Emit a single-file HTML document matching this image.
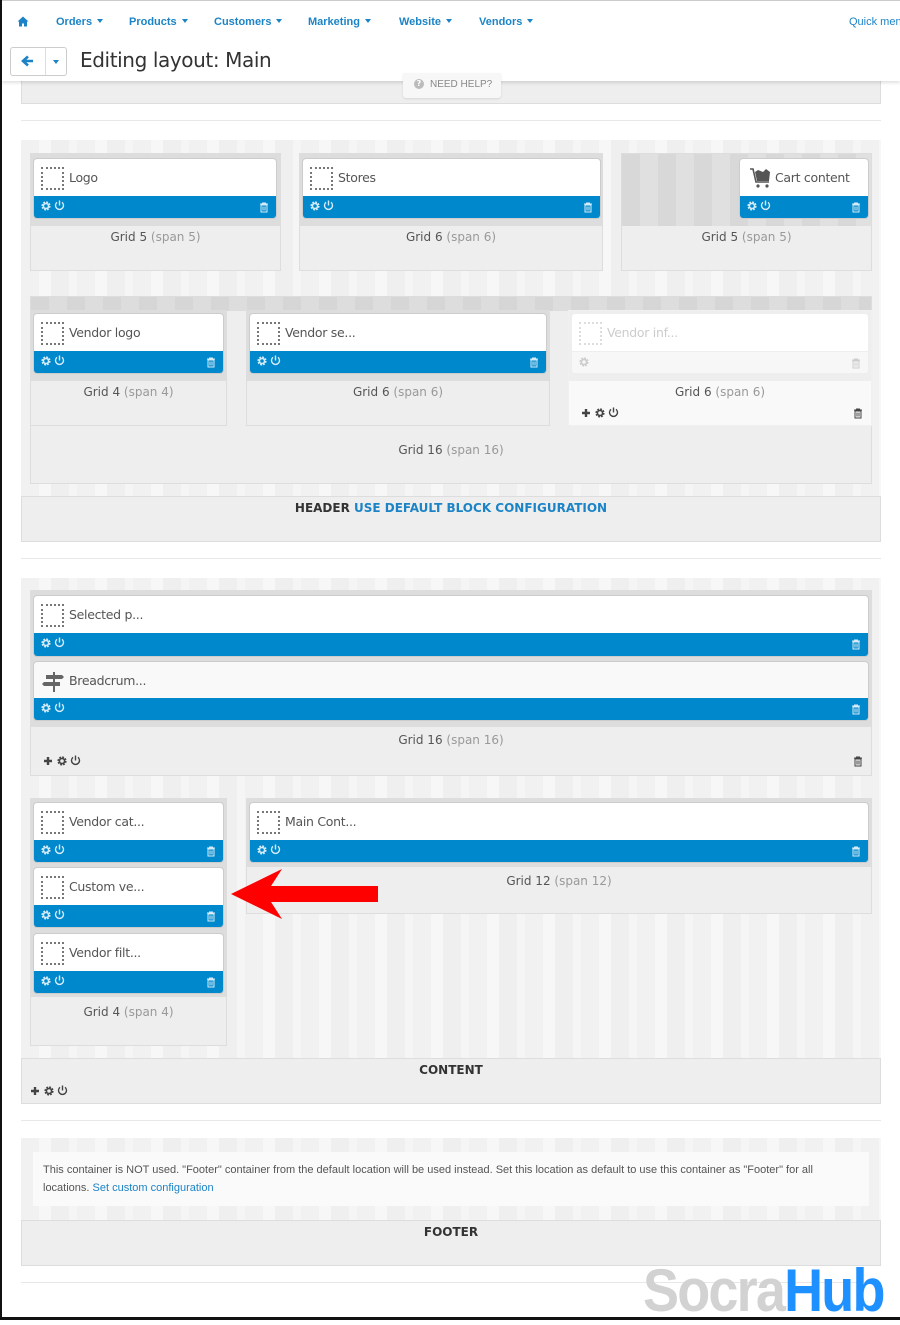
<!DOCTYPE html>
<html><head><meta charset="utf-8">
<style>
*{box-sizing:border-box;margin:0;padding:0}
body{width:900px;height:1320px;position:relative;background:#fff;font-family:"DejaVu Sans","Liberation Sans",sans-serif;overflow:hidden;color:#333}
.a{position:absolute}
.nav{font-family:"Liberation Sans",sans-serif;font-size:11px;font-weight:bold;color:#1c84c6;top:16px}
.nav:after{content:"";display:inline-block;margin-left:5px;border-top:4px solid #1c84c6;border-left:3px solid transparent;border-right:3px solid transparent;vertical-align:2px}
.stripe{background:repeating-linear-gradient(90deg,#f1f1f1 0 18px,#f7f7f7 18px 30px,#efefef 30px 48px,#f5f5f5 48px 56px)}
.grid{position:absolute;background:#eee;border:1px solid #ddd}
.gtop{position:absolute;left:0;right:0;top:0;background:#ddd}
.lbl{position:absolute;left:0;right:0;text-align:center;font-size:12px;color:#555}
.lbl span{color:#999}
.blk{position:absolute;background:#fff;border-radius:3px;box-shadow:0 0 0 1px #ccc;overflow:hidden}
.blk .t{position:absolute;left:35px;top:11px;font-size:12.5px;color:#555;white-space:nowrap;letter-spacing:-0.3px}
.blk .ph{position:absolute;left:7px;top:8px;width:23px;height:23px;border:2px dotted #777}
.blk .bar{position:absolute;left:0;right:0;bottom:0;height:22px;background:#0088cc;color:#d5ecf8}
.bar .g{position:absolute;left:7px;top:5px}
.bar .p{position:absolute;left:20px;top:4px}
.bar .tr{position:absolute;right:7px;top:6px}
.sec{position:absolute;left:21px;width:860px;background:#eee;border:1px solid #ddd;text-align:center;font-size:12px;font-weight:bold;color:#333;padding-top:4px}
.hr{position:absolute;left:21px;width:860px;height:1px;background:#e8e8e8}
</style></head><body>
<svg width="0" height="0" style="position:absolute">
<defs>
<g id="gear"><circle cx="5" cy="5" r="3.3" fill="none" stroke="currentColor" stroke-width="2.6" stroke-dasharray="1.6 1"/><circle cx="5" cy="5" r="2.6" fill="none" stroke="currentColor" stroke-width="1.6"/></g>
<g id="pow"><path d="M3 2.3A4 4 0 1 0 8 2.3" fill="none" stroke="currentColor" stroke-width="1.4"/><path d="M5.5 0.5V5.5" stroke="currentColor" stroke-width="1.4"/></g>
<g id="trash"><path d="M1 2H9M3.5 2V1H6.5V2M2 3H8V10H2Z M4 4.5V8.5M6 4.5V8.5" fill="none" stroke="currentColor" stroke-width="1"/></g>
<g id="plus"><path d="M5 1V9M1 5H9" stroke="currentColor" stroke-width="2.4"/></g>
</defs></svg>

<div class="a" style="left:0;top:0;width:2px;height:1320px;background:#111;z-index:9"></div>
<div class="a" style="left:0;top:1317px;width:900px;height:3px;background:#111;z-index:9"></div>
<div class="a" style="left:0;top:0;width:900px;height:1px;background:#ccc"></div>

<svg class="a" style="left:17px;top:16px" width="12" height="11" viewBox="0 0 12 11"><path d="M6 0.5L0.5 5.5H2V10.5H5V7.5H7V10.5H10V5.5H11.5Z" fill="#1c84c6"/></svg>
<div class="a nav" style="left:56px">Orders</div>
<div class="a nav" style="left:129px">Products</div>
<div class="a nav" style="left:214px">Customers</div>
<div class="a nav" style="left:308px">Marketing</div>
<div class="a nav" style="left:399px">Website</div>
<div class="a nav" style="left:479px">Vendors</div>
<div class="a" style="left:849px;top:16px;font-family:'Liberation Sans',sans-serif;font-size:11px;color:#1c84c6;white-space:nowrap">Quick menu</div>

<div class="a" style="left:2px;top:43px;width:898px;height:38px;background:#fff;box-shadow:0 2px 3px rgba(0,0,0,.12);z-index:3"></div>
<div class="a" style="left:10px;top:47px;width:57px;height:29px;border:1px solid #ccc;border-radius:3px;background:#fff;z-index:4"></div>
<div class="a" style="left:45px;top:48px;width:1px;height:27px;background:#ddd;z-index:4"></div>
<svg class="a" style="left:21px;top:55px;z-index:5" width="13" height="12" viewBox="0 0 13 12"><path d="M12 6H3M7 1.5L2 6L7 10.5" fill="none" stroke="#1c84c6" stroke-width="2.6"/></svg>
<div class="a" style="left:53px;top:60px;border-top:4px solid #1c84c6;border-left:3px solid transparent;border-right:3px solid transparent;z-index:5"></div>
<div class="a" style="left:80px;top:48px;font-size:20px;color:#333;z-index:5;letter-spacing:-0.4px">Editing layout: Main</div>

<div class="a" style="left:21px;top:81px;width:860px;height:23px;background:#eee;border:1px solid #ddd;border-top:none"></div>
<div class="a" style="left:403px;top:73px;width:98px;height:25px;background:#f7f7f7;border-radius:0 0 3px 3px;box-shadow:0 1px 2px rgba(0,0,0,.1);z-index:4;font-size:10px;color:#888;padding:6px 0 0 27px;font-family:'Liberation Sans',sans-serif">NEED HELP?</div>
<div class="a" style="left:414px;top:79px;width:10px;height:10px;border-radius:50%;background:#bbb;z-index:5;color:#fff;font-size:8px;text-align:center;line-height:10px;font-weight:bold">?</div>
<div class="hr" style="top:120px"></div>

<div class="a stripe" style="left:21px;top:140px;width:860px;height:356px"></div>
<div class="grid" style="left:30px;top:153px;width:251px;height:118px"><div class="gtop" style="height:72px"></div><div class="lbl" style="top:76px">Grid 5 <span>(span 5)</span></div></div>
<div class="grid" style="left:299px;top:153px;width:304px;height:118px"><div class="gtop" style="height:72px"></div><div class="lbl" style="top:76px">Grid 6 <span>(span 6)</span></div></div>
<div class="grid" style="left:621px;top:153px;width:251px;height:118px"><div class="gtop" style="height:72px;background:repeating-linear-gradient(90deg,#d8d8d8 0 18px,#e0e0e0 18px 36px)"></div><div class="lbl" style="top:76px">Grid 5 <span>(span 5)</span></div></div>

<div class="blk" style="left:34px;top:159px;width:242px;height:59px"><div class="ph"></div><div class="t">Logo</div><div class="bar"><svg class="g" width="11" height="11"><use href="#gear"/></svg><svg class="p" width="11" height="12"><use href="#pow"/></svg><svg class="tr" width="10" height="11"><use href="#trash"/></svg></div></div>
<div class="blk" style="left:303px;top:159px;width:297px;height:59px"><div class="ph"></div><div class="t">Stores</div><div class="bar"><svg class="g" width="11" height="11"><use href="#gear"/></svg><svg class="p" width="11" height="12"><use href="#pow"/></svg><svg class="tr" width="10" height="11"><use href="#trash"/></svg></div></div>
<div class="blk" style="left:740px;top:159px;width:128px;height:59px"><svg class="a" style="left:9px;top:8px" width="24" height="22" viewBox="0 0 24 22"><path d="M1 2H4L7 15H20" fill="none" stroke="#555" stroke-width="1.6"/><path d="M6 5L9 3L14 5L17 2L21 5L20 14H8Z" fill="#555"/><circle cx="9" cy="19" r="1.6" fill="#555"/><circle cx="18" cy="19" r="1.6" fill="#555"/></svg><div class="t">Cart content</div><div class="bar"><svg class="g" width="11" height="11"><use href="#gear"/></svg><svg class="p" width="11" height="12"><use href="#pow"/></svg><svg class="tr" width="10" height="11"><use href="#trash"/></svg></div></div>

<div class="grid" style="left:30px;top:296px;width:842px;height:188px"><div class="gtop" style="height:14px;background:repeating-linear-gradient(90deg,#d6d6d6 0 18px,#dddddd 18px 36px)"></div><div class="lbl" style="top:146px">Grid 16 <span>(span 16)</span></div></div>
<div class="grid" style="left:30px;top:310px;width:197px;height:116px"><div class="gtop" style="height:70px"></div><div class="lbl" style="top:74px">Grid 4 <span>(span 4)</span></div></div>
<div class="grid" style="left:246px;top:310px;width:304px;height:116px"><div class="gtop" style="height:70px"></div><div class="lbl" style="top:74px">Grid 6 <span>(span 6)</span></div></div>
<div class="grid" style="left:568px;top:310px;width:304px;height:116px;background:#f9f9f9;border-color:#f0f0f0"><div class="gtop" style="height:70px;background:#eee"></div><div class="lbl" style="top:74px">Grid 6 <span>(span 6)</span></div></div>
<div class="blk" style="left:34px;top:314px;width:189px;height:59px"><div class="ph"></div><div class="t">Vendor logo</div><div class="bar"><svg class="g" width="11" height="11"><use href="#gear"/></svg><svg class="p" width="11" height="12"><use href="#pow"/></svg><svg class="tr" width="10" height="11"><use href="#trash"/></svg></div></div>
<div class="blk" style="left:250px;top:314px;width:296px;height:59px"><div class="ph"></div><div class="t">Vendor se...</div><div class="bar"><svg class="g" width="11" height="11"><use href="#gear"/></svg><svg class="p" width="11" height="12"><use href="#pow"/></svg><svg class="tr" width="10" height="11"><use href="#trash"/></svg></div></div>
<div class="blk" style="left:572px;top:314px;width:296px;height:59px;box-shadow:none"><div class="ph" style="border-color:#ddd"></div><div class="t" style="color:#ccc">Vendor inf...</div><div class="bar" style="background:#f7f7f7;border-top:1px solid #eee;color:#ccc"><svg class="g" width="11" height="11"><use href="#gear"/></svg><svg class="tr" width="10" height="11"><use href="#trash"/></svg></div></div>
<svg class="a" style="left:581px;top:408px;color:#444" width="11" height="11"><use href="#plus"/></svg>
<svg class="a" style="left:595px;top:408px;color:#444" width="11" height="11"><use href="#gear"/></svg>
<svg class="a" style="left:608px;top:407px;color:#444" width="11" height="12"><use href="#pow"/></svg>
<svg class="a" style="left:853px;top:408px;color:#444" width="11" height="11"><use href="#trash"/></svg>

<div class="sec" style="top:496px;height:46px">HEADER <span style="color:#1c84c6">USE DEFAULT BLOCK CONFIGURATION</span></div>
<div class="hr" style="top:558px"></div>

<div class="a stripe" style="left:21px;top:578px;width:860px;height:481px"></div>
<div class="grid" style="left:30px;top:590px;width:842px;height:186px"><div class="gtop" style="height:136px"></div><div class="lbl" style="top:142px">Grid 16 <span>(span 16)</span></div></div>
<div class="blk" style="left:34px;top:596px;width:834px;height:60px"><div class="ph"></div><div class="t">Selected p...</div><div class="bar" style="height:23px"><svg class="g" width="11" height="11"><use href="#gear"/></svg><svg class="p" width="11" height="12"><use href="#pow"/></svg><svg class="tr" width="10" height="11"><use href="#trash"/></svg></div></div>
<div class="blk" style="left:34px;top:662px;width:834px;height:58px;background:#f9f9f9"><svg class="a" style="left:8px;top:7px" width="24" height="24" viewBox="0 0 24 24"><path d="M11 3H13V23H11Z M4 6H20L22 8L20 10H4Z M2 13H18V17H2L0 15Z" fill="#666"/></svg><div class="t">Breadcrum...</div><div class="bar"><svg class="g" width="11" height="11"><use href="#gear"/></svg><svg class="p" width="11" height="12"><use href="#pow"/></svg><svg class="tr" width="10" height="11"><use href="#trash"/></svg></div></div>
<svg class="a" style="left:43px;top:756px;color:#444" width="11" height="11"><use href="#plus"/></svg>
<svg class="a" style="left:57px;top:756px;color:#444" width="11" height="11"><use href="#gear"/></svg>
<svg class="a" style="left:70px;top:755px;color:#444" width="11" height="12"><use href="#pow"/></svg>
<svg class="a" style="left:853px;top:756px;color:#444" width="11" height="11"><use href="#trash"/></svg>

<div class="grid" style="left:30px;top:798px;width:197px;height:248px"><div class="gtop" style="height:198px"></div><div class="lbl" style="top:206px">Grid 4 <span>(span 4)</span></div></div>
<div class="grid" style="left:246px;top:798px;width:626px;height:116px"><div class="gtop" style="height:68px"></div><div class="lbl" style="top:75px">Grid 12 <span>(span 12)</span></div></div>
<div class="blk" style="left:34px;top:803px;width:189px;height:59px"><div class="ph"></div><div class="t">Vendor cat...</div><div class="bar"><svg class="g" width="11" height="11"><use href="#gear"/></svg><svg class="p" width="11" height="12"><use href="#pow"/></svg><svg class="tr" width="10" height="11"><use href="#trash"/></svg></div></div>
<div class="blk" style="left:34px;top:868px;width:189px;height:59px"><div class="ph"></div><div class="t">Custom ve...</div><div class="bar"><svg class="g" width="11" height="11"><use href="#gear"/></svg><svg class="p" width="11" height="12"><use href="#pow"/></svg><svg class="tr" width="10" height="11"><use href="#trash"/></svg></div></div>
<div class="blk" style="left:34px;top:934px;width:189px;height:59px"><div class="ph"></div><div class="t">Vendor filt...</div><div class="bar"><svg class="g" width="11" height="11"><use href="#gear"/></svg><svg class="p" width="11" height="12"><use href="#pow"/></svg><svg class="tr" width="10" height="11"><use href="#trash"/></svg></div></div>
<div class="blk" style="left:250px;top:803px;width:618px;height:59px"><div class="ph"></div><div class="t">Main Cont...</div><div class="bar"><svg class="g" width="11" height="11"><use href="#gear"/></svg><svg class="p" width="11" height="12"><use href="#pow"/></svg><svg class="tr" width="10" height="11"><use href="#trash"/></svg></div></div>

<svg class="a" style="left:0;top:0;z-index:6" width="900" height="1320"><path d="M231 894L282 869L271 886H378V902H271L282 919Z" fill="#f00"/></svg>

<div class="sec" style="top:1058px;height:46px">CONTENT</div>
<svg class="a" style="left:30px;top:1086px;color:#444" width="11" height="11"><use href="#plus"/></svg>
<svg class="a" style="left:44px;top:1086px;color:#444" width="11" height="11"><use href="#gear"/></svg>
<svg class="a" style="left:57px;top:1085px;color:#444" width="11" height="12"><use href="#pow"/></svg>
<div class="hr" style="top:1120px"></div>

<div class="a stripe" style="left:21px;top:1138px;width:860px;height:83px"></div>
<div class="a" style="left:33px;top:1152px;width:836px;height:54px;background:#fafafa;font-family:'Liberation Sans',sans-serif;font-size:11px;color:#555;line-height:18px;padding:9px 10px">This container is NOT used. "Footer" container from the default location will be used instead. Set this location as default to use this container as "Footer" for all locations. <span style="color:#1c84c6">Set custom configuration</span></div>
<div class="sec" style="top:1220px;height:46px">FOOTER</div>
<div class="hr" style="top:1282px"></div>

<div class="a" style="left:643px;top:1256px;font-family:'Liberation Sans',sans-serif;font-weight:bold;font-size:60px;letter-spacing:-2px;white-space:nowrap;z-index:7;transform:scaleX(0.9);transform-origin:left"><span style="color:#d2d2d2">Socra</span><span style="color:#1e90ff">Hub</span></div>
</body></html>
